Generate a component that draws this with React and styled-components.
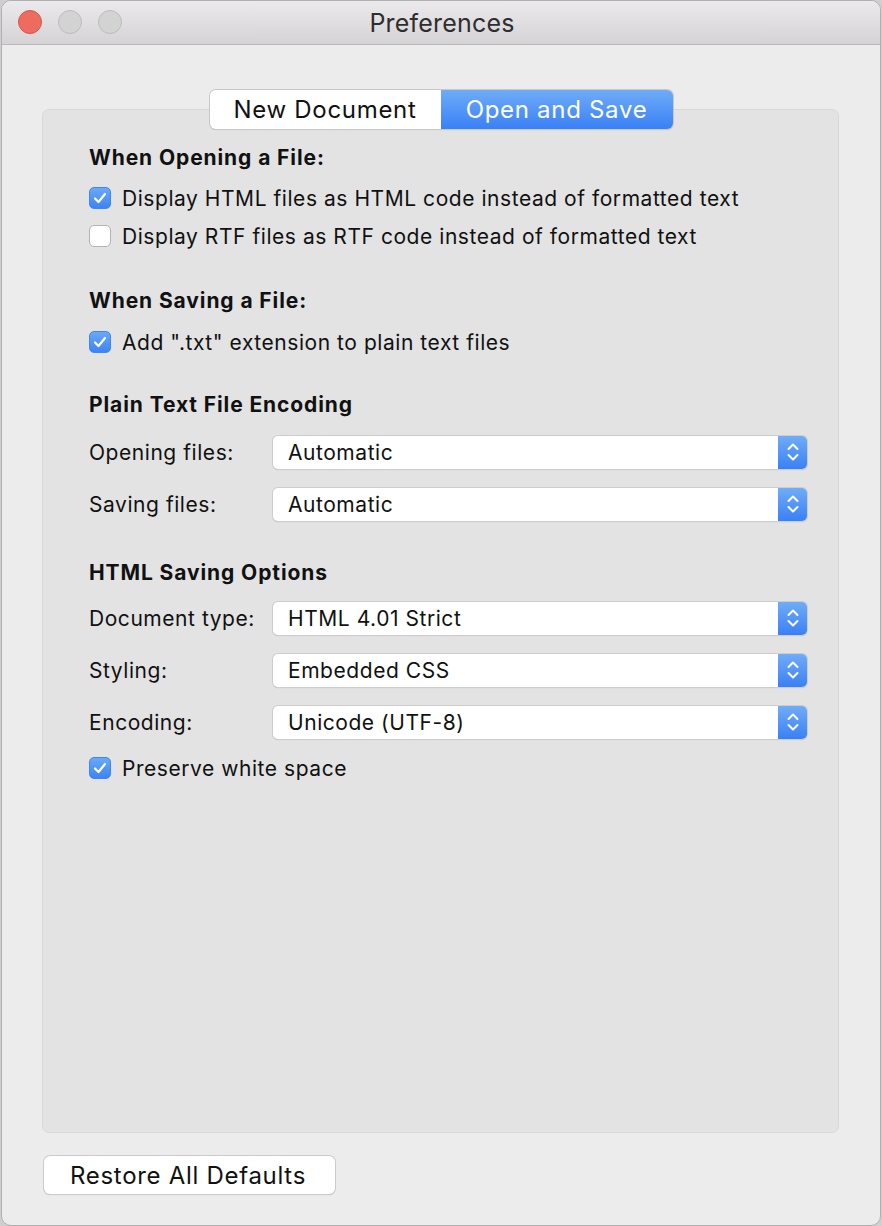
import React from "react";
import styled, { createGlobalStyle } from "styled-components";

const Global = createGlobalStyle`
  html, body { margin: 0; padding: 0; }
  body {
    background: #cfcfcf;
    font-family: Inter, "Liberation Sans", Arial, sans-serif;
    color: #111;
    -webkit-font-smoothing: antialiased;
  }
`;

const Window = styled.div`
  box-sizing: border-box;
  margin-left: 1px;
  width: 880px;
  height: 1226px;
  display: flex;
  flex-direction: column;
  background: #ececec;
  border: 1px solid #b0b0b0;
  border-radius: 10px;
  overflow: hidden;
`;

const TitleBar = styled.div`
  position: relative;
  height: 43px;
  flex: none;
  display: flex;
  align-items: center;
  justify-content: center;
  background: linear-gradient(#ebe9eb, #d5d3d5);
  border-bottom: 1px solid #b9b9b9;
`;

const Lights = styled.div`
  position: absolute;
  left: 16px;
  top: 9px;
  display: flex;
  gap: 16px;
`;

const Light = styled.span`
  box-sizing: border-box;
  width: 24px;
  height: 24px;
  border-radius: 50%;
  background: ${(p) => (p.$red ? "#ee6b60" : "#d3d3d3")};
  border: 1px solid ${(p) => (p.$red ? "#d5574c" : "#bcbcbc")};
`;

const Title = styled.div`
  font-size: 25px;
  color: #2e2e2e;
  letter-spacing: 0.2px;
  padding-left: 2px;
`;

const Content = styled.div`
  flex: 1;
  display: flex;
  flex-direction: column;
  padding: 45px 41px 31px 40px;
  min-height: 0;
`;

const TabRow = styled.div`
  display: flex;
  justify-content: center;
  margin-bottom: -20px;
  position: relative;
  z-index: 1;
  padding-left: 1px;
`;

const Segmented = styled.div`
  display: flex;
  height: 39px;
  border-radius: 6px;
  box-shadow: 0 0 0 1px #c8c8c8, 0 1px 1px rgba(0, 0, 0, 0.2);
  overflow: hidden;
`;

const Tab = styled.div`
  width: ${(p) => p.$w}px;
  display: flex;
  align-items: center;
  justify-content: center;
  font-size: 24px;
  letter-spacing: 0.7px;
  color: ${(p) => (p.$active ? "#fff" : "#111")};
  background: ${(p) =>
    p.$active ? "linear-gradient(#6eacf8, #3a80f6)" : "#ffffff"};
`;

const Panel = styled.div`
  flex: 1;
  box-sizing: border-box;
  background: #e3e3e3;
  border: 1px solid #d8d8d8;
  border-radius: 7px;
  padding: 34px 31px 0 46px;
  display: flex;
  flex-direction: column;
`;

const Heading = styled.div`
  height: 26px;
  display: flex;
  align-items: center;
  font-weight: 700;
  font-size: 21px;
  letter-spacing: 0.9px;
  margin-top: ${(p) => p.$mt || 0}px;
  margin-bottom: ${(p) => p.$mb || 0}px;
`;

const CheckRow = styled.label`
  height: 38px;
  display: flex;
  align-items: center;
  gap: 11px;
  font-size: 21px;
  letter-spacing: 0.55px;
  margin-top: ${(p) => p.$mt || 0}px;
`;

const Box = styled.span`
  box-sizing: border-box;
  width: 22px;
  height: 22px;
  border-radius: 5px;
  display: flex;
  align-items: center;
  justify-content: center;
  background: ${(p) => (p.$on ? "linear-gradient(#6aa9f8, #3b84f6)" : "#fff")};
  border: 1px solid ${(p) => (p.$on ? "#3f86f0" : "#b4b4b4")};
`;

const FieldRow = styled.div`
  height: 52px;
  display: flex;
  align-items: center;
  font-size: 21px;
  letter-spacing: 0.55px;
`;

const FieldLabel = styled.div`
  width: 184px;
  flex: none;
`;

const Select = styled.div`
  flex: 1;
  height: 33px;
  display: flex;
  border-radius: 5px;
  overflow: hidden;
  background: #fff;
  box-shadow: 0 0 0 1px #cdcdcd, 0 1px 1px rgba(0, 0, 0, 0.22);
`;

const SelectText = styled.div`
  flex: 1;
  display: flex;
  align-items: center;
  padding-left: 15px;
`;

const Stepper = styled.div`
  width: 29px;
  display: flex;
  align-items: center;
  justify-content: center;
  background: linear-gradient(#70acf8, #3a80f6);
`;

const Footer = styled.div`
  display: flex;
  padding-top: 23px;
`;

const Button = styled.button`
  margin-left: 2px;
  width: 291px;
  height: 38px;
  border: none;
  border-radius: 6px;
  background: #fff;
  box-shadow: 0 0 0 1px #cbcbcb, 0 1px 1px rgba(0, 0, 0, 0.22);
  font-family: inherit;
  font-size: 24px;
  letter-spacing: 0.7px;
  color: #111;
  padding: 0 3px 0 0;
`;

const Check = () => (
  <svg width="14" height="12" viewBox="0 0 14 12">
    <polyline
      points="2,6.5 5.5,10 12,2"
      fill="none"
      stroke="#fff"
      strokeWidth="2.2"
      strokeLinecap="round"
      strokeLinejoin="round"
    />
  </svg>
);

const Chevrons = () => (
  <svg width="14" height="24" viewBox="0 0 14 24">
    <polyline points="2.5,9 7,4.5 11.5,9" fill="none" stroke="#fff" strokeWidth="2" strokeLinecap="round" strokeLinejoin="round" />
    <polyline points="2.5,15 7,19.5 11.5,15" fill="none" stroke="#fff" strokeWidth="2" strokeLinecap="round" strokeLinejoin="round" />
  </svg>
);

const CheckItem = ({ on, children, mt }) => (
  <CheckRow $mt={mt}>
    <Box $on={on}>{on && <Check />}</Box>
    {children}
  </CheckRow>
);

const Field = ({ label, value }) => (
  <FieldRow>
    <FieldLabel>{label}</FieldLabel>
    <Select>
      <SelectText>{value}</SelectText>
      <Stepper>
        <Chevrons />
      </Stepper>
    </Select>
  </FieldRow>
);

export default function App() {
  return (
    <>
      <Global />
      <Window>
        <TitleBar>
          <Lights>
            <Light $red />
            <Light />
            <Light />
          </Lights>
          <Title>Preferences</Title>
        </TitleBar>
        <Content>
          <TabRow>
            <Segmented>
              <Tab $w={231}>New Document</Tab>
              <Tab $w={232} $active>Open and Save</Tab>
            </Segmented>
          </TabRow>
          <Panel>
            <Heading $mb={9}>When Opening a File:</Heading>
            <CheckItem on>Display HTML files as HTML code instead of formatted text</CheckItem>
            <CheckItem>Display RTF files as RTF code instead of formatted text</CheckItem>
            <Heading $mt={32} $mb={10}>When Saving a File:</Heading>
            <CheckItem on>Add ".txt" extension to plain text files</CheckItem>
            <Heading $mt={30} $mb={9}>Plain Text File Encoding</Heading>
            <Field label="Opening files:" value="Automatic" />
            <Field label="Saving files:" value="Automatic" />
            <Heading $mt={29} $mb={7}>HTML Saving Options</Heading>
            <Field label="Document type:" value="HTML 4.01 Strict" />
            <Field label="Styling:" value="Embedded CSS" />
            <Field label="Encoding:" value="Unicode (UTF-8)" />
            <CheckItem on mt={1}>Preserve white space</CheckItem>
          </Panel>
          <Footer>
            <Button>Restore All Defaults</Button>
          </Footer>
        </Content>
      </Window>
    </>
  );
}
